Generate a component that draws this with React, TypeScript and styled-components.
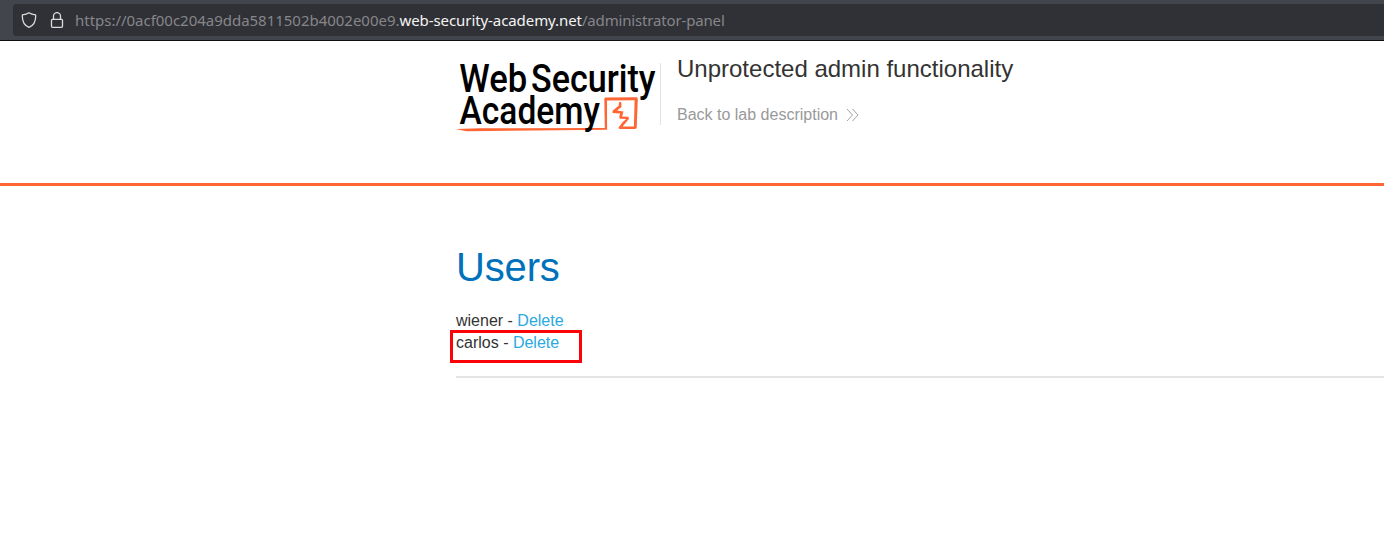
import React from "react";
import styled, { createGlobalStyle } from "styled-components";

const GlobalStyle = createGlobalStyle`
  * { box-sizing: border-box; }
  body {
    margin: 0;
    background: #fff;
    color: #333332;
    font: 16px/22px "Liberation Sans", Arial, sans-serif;
    overflow: hidden;
  }
`;

const Page = styled.div`
  width: 100%;
  height: 533px;
  overflow: hidden;
`;

const BrowserBar = styled.div`
  height: 41px;
  padding: 4px 0 0 13px;
  background: #42454c;
  border-bottom: 1px solid #0e0f13;
`;

const AddressField = styled.div`
  display: flex;
  align-items: center;
  height: 32px;
  padding-left: 8px;
  border-radius: 4px 0 0 4px;
  background: #303136;
`;

const FieldIcon = styled.svg`
  display: block;
  flex: none;
  width: 16px;
  height: 16px;
  margin-right: 12px;
  fill: none;
  stroke: #dcdcda;
  stroke-width: 1.3;
  stroke-linecap: round;
  stroke-linejoin: round;
`;

const Url = styled.div`
  margin-left: -2px;
  padding-bottom: 1px;
  color: #86868a;
  font: 15px/22px "Noto Sans", sans-serif;
  letter-spacing: -0.02px;
  white-space: nowrap;
`;

const Host = styled.span`
  color: #f4f4f2;
  letter-spacing: -0.08px;
`;

const UrlPath = styled.span`
  letter-spacing: -0.16px;
`;

const LabHeader = styled.header`
  display: flex;
  height: 145px;
  padding: 12px 0 0 456px;
  border-bottom: 3px solid #ff6633;
`;

const Logo = styled.svg`
  display: block;
  flex: none;
  width: 204px;
  height: 86px;
  overflow: visible;
`;

const LogoText = styled.text`
  font-family: Roboto, sans-serif;
  font-size: 38px;
  font-weight: 500;
  fill: #000;
`;

const TitleBlock = styled.div`
  display: flex;
  flex-direction: column;
  align-items: flex-start;
  height: 62px;
  margin-top: 10px;
  padding-left: 16px;
  border-left: 1px solid #e3e3e4;
`;

const Title = styled.h2`
  margin: -8px 0 0;
  font-size: 24px;
  font-weight: 400;
  line-height: 28px;
`;

const BackLink = styled.a`
  display: flex;
  align-items: center;
  margin-top: 21px;
  color: #999;
  line-height: 22px;
`;

const Chevrons = styled.svg`
  width: 13px;
  height: 14px;
  margin: 0 0 1px 8px;
  fill: none;
  stroke: #999;
  stroke-width: 0.9;
`;

const Content = styled.main`
  padding: 58px 0 0 456px;
`;

const Heading = styled.h1`
  margin: 0 0 20px;
  color: #0071ba;
  font-size: 40px;
  font-weight: 400;
  line-height: 46px;
  letter-spacing: -0.15px;
`;

const UserRow = styled.div`
  position: relative;
  width: fit-content;
  height: 22px;
`;

const DeleteLink = styled.a`
  color: #29a9e1;
`;

const Highlight = styled.div`
  position: absolute;
  top: -2px;
  left: -6px;
  width: 132px;
  height: 33px;
  border: 3px solid #fc0308;
`;

const Divider = styled.div`
  height: 2px;
  margin-top: 22px;
  background: #e3e4e4;
`;

const users = [
  { name: "wiener", marked: false },
  { name: "carlos", marked: true },
];

export default function App() {
  return (
    <Page>
      <GlobalStyle />
      <BrowserBar>
        <AddressField>
          <FieldIcon viewBox="0 0 16 16">
            <path d="M8 .8C6.3 2 3.8 2.7 1.4 2.9C1 8.5 2.5 13.1 8 15.3C13.5 13.1 15 8.5 14.6 2.9C12.2 2.7 9.7 2 8 .8Z" />
          </FieldIcon>
          <FieldIcon viewBox="0 0 16 16">
            <rect x="2.5" y="7.3" width="11" height="8" rx="1" />
            <path d="M4.5 7.2V4.1a3.5 3.5 0 0 1 7 0v3.1" />
          </FieldIcon>
          <Url>
            https://0acf00c204a9dda5811502b4002e00e9.<Host>web-security-academy.net</Host>
            <UrlPath>/administrator-panel</UrlPath>
          </Url>
        </AddressField>
      </BrowserBar>
      <LabHeader>
        <Logo viewBox="456 53 204 86">
          <path
            transform="translate(-0.7 0)"
            d="M456.5 129.1L481 128.2L605.5 128L605 98.5L606 97.6L637.5 97.3L638.5 98.5L637.4 128L636 129L620 129L619.3 127.4L623.2 122.2L627 118.9L620.5 118.8L619.9 116.8L620.9 113.4L613.2 113L613.3 110.8L619.3 105.8L620.1 101.8L622 102.2L622.2 107L617.8 110.4L624.2 111.5L622.8 116.4L629.2 116.8L629.6 119L623.3 126.4L634.6 126.5L635.3 100.2L607.7 100.5L607.8 129.8L490 131L467 131.3Z"
            fill="#ff6633"
          />
          <LogoText x="459.3" y="91.7" textLength="68" lengthAdjust="spacingAndGlyphs">Web</LogoText>
          <LogoText x="531" y="91.7" textLength="124.5" lengthAdjust="spacingAndGlyphs">Security</LogoText>
          <LogoText x="459.6" y="124.3" textLength="140.4" lengthAdjust="spacingAndGlyphs">Academy</LogoText>
        </Logo>
        <TitleBlock>
          <Title>Unprotected admin functionality</Title>
          <BackLink>
            Back to lab description
            <Chevrons viewBox="0 0 13 14">
              <path d="M1 1L6.5 7L1 13M6.5 1L12 7L6.5 13" />
            </Chevrons>
          </BackLink>
        </TitleBlock>
      </LabHeader>
      <Content>
        <Heading>Users</Heading>
        {users.map(({ name, marked }) => (
          <UserRow key={name}>
            {name} - <DeleteLink>Delete</DeleteLink>
            {marked && <Highlight />}
          </UserRow>
        ))}
        <Divider />
      </Content>
    </Page>
  );
}
